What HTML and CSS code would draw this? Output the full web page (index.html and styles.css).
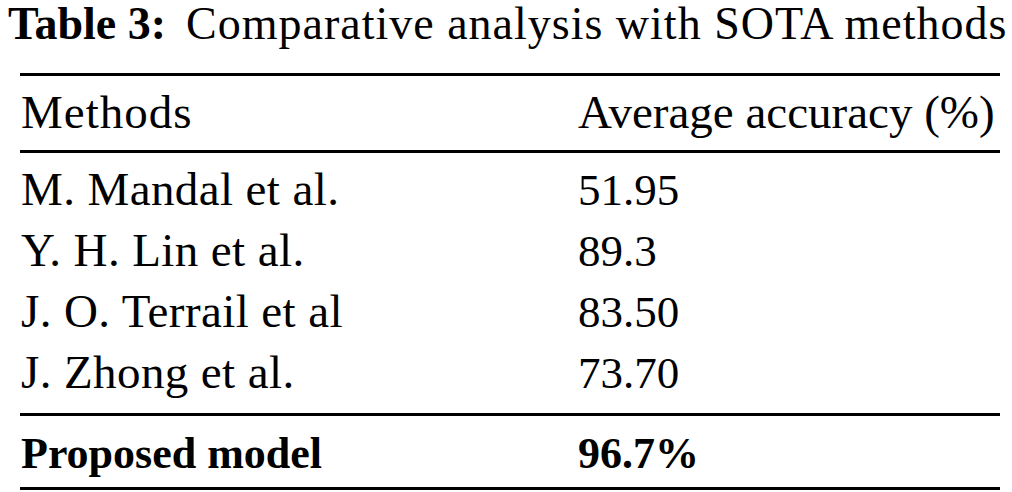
FILE: index.html
```html
<!DOCTYPE html>
<html>
<head>
<meta charset="utf-8">
<link rel="stylesheet" href="styles.css">
</head>
<body>
<div class="caption"><span class="label">Table 3:</span><span class="title">Comparative analysis with SOTA methods</span></div>
<table class="results">
  <thead>
    <tr class="head-row"><th class="name">Methods</th><th class="value">Average accuracy (%)</th></tr>
  </thead>
  <tbody>
    <tr class="first"><td class="name">M. Mandal et al.</td><td class="value">51.95</td></tr>
    <tr><td class="name">Y. H. Lin et al.</td><td class="value">89.3</td></tr>
    <tr><td class="name">J. O. Terrail et al</td><td class="value">83.50</td></tr>
    <tr class="last"><td class="name">J. Zhong et al.</td><td class="value">73.70</td></tr>
  </tbody>
  <tfoot>
    <tr class="total"><td class="name">Proposed model</td><td class="value">96.7%</td></tr>
  </tfoot>
</table>
</body>
</html>
```

FILE: styles.css
```css
html, body {
  margin: 0;
  padding: 0;
  background: #fff;
}
body {
  font-family: "Liberation Serif", "Times New Roman", serif;
  color: #000;
}
.caption {
  padding-left: 8px;
  font-size: 46px;
  line-height: 48px;
  height: 48px;
  white-space: nowrap;
}
.caption .label {
  font-weight: bold;
  margin-right: 20px;
}
.caption .title {
  letter-spacing: 1px;
}
.results {
  margin-left: 20px;
  margin-top: 25px;
  width: 980px;
  border-collapse: collapse;
  line-height: 61px;
}
.results th, .results td {
  padding: 0;
  text-align: left;
  font-weight: normal;
  vertical-align: baseline;
}
.results .name {
  width: 557px;
  padding-left: 1px;
  font-size: 47px;
  letter-spacing: 0.4px;
}
.results .value {
  font-size: 45px;
}
.head-row {
  border-top: 3px solid #000;
  border-bottom: 3px solid #000;
}
.head-row th {
  padding-top: 6px;
  padding-bottom: 7px;
}
.head-row .name {
  letter-spacing: 1px;
}
.head-row .value {
  font-size: 47px;
}
tbody td {
  line-height: 60px;
}
.first td {
  padding-top: 6px;
}
.last td {
  padding-bottom: 10px;
}
.total {
  border-top: 3px solid #000;
  border-bottom: 3px solid #000;
}
.total td {
  font-weight: bold;
  padding-top: 7px;
  padding-bottom: 3px;
}
.total .name, .total .value {
  font-size: 44px;
  letter-spacing: 0;
}
```
